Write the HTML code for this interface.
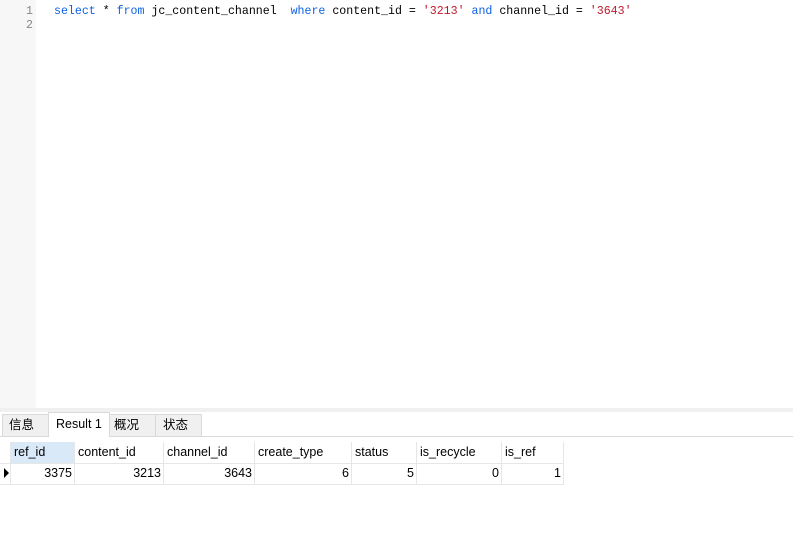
<!DOCTYPE html><html><head><style>
body{margin:0;width:793px;height:541px;background:#fff;position:relative;overflow:hidden;font-family:"Liberation Sans","Noto Sans CJK SC",sans-serif}
.g{position:absolute;left:0;top:0;width:36px;height:408px;background:#f7f7f7}
.ln{position:absolute;left:0;width:33px;text-align:right;font:11.6px "Liberation Mono",monospace;color:#888}
.code{position:absolute;left:54px;top:5px;font:11.6px/14px "Liberation Mono",monospace;color:#000;white-space:pre}
.k{color:#0d62e6}.s{color:#c0182a}
.band{position:absolute;left:0;top:408px;width:793px;height:4px;background:#f0f0f0}
.tab{position:absolute;top:414px;height:22px;background:#f0f0f0;border:1px solid #d9d9d9;border-bottom:none;box-sizing:border-box;font-size:12.5px;line-height:18px;padding:1px 0 0 6px}
.tab.sel{top:412px;height:25px;background:#fff;padding:2px 0 0 7px}
.line{position:absolute;left:0;top:436px;width:793px;height:1px;background:#d9d9d9}
.c{position:absolute;box-sizing:border-box;border-right:1px solid #e6e6e6;border-bottom:1px solid #e6e6e6;font-size:12.5px;padding:3px 4px 0 3px;height:22px}
.h{top:442px}.r{top:463px;text-align:right;padding-right:2px}
</style></head><body>
<div class="g"></div>
<div class="ln" style="top:5px">1</div><div class="ln" style="top:19px">2</div>
<div class="code"><span class="k">select</span> * <span class="k">from</span> jc_content_channel  <span class="k">where</span> content_id = <span class="s">'3213'</span> <span class="k">and</span> channel_id = <span class="s">'3643'</span></div>
<div class="band"></div>
<div class="line"></div>
<div class="tab" style="left:2px;width:47px">信息</div>
<div class="tab sel" style="left:48px;width:62px">Result 1</div>
<div class="tab" style="left:109px;width:47px;padding-left:4px">概况</div>
<div class="tab" style="left:155px;width:47px;padding-left:7px">状态</div>
<div class="c h" style="left:0;width:11px"></div>
<div class="c r" style="left:0;width:11px;padding:4px 0 0 2px"><svg width="7" height="12"><path d="M1 1L6 6L1 11Z" fill="#000"/></svg></div>
<div class="c h" style="left:11px;width:64px;background:#d9e9f7">ref_id</div>
<div class="c h" style="left:75px;width:89px">content_id</div>
<div class="c h" style="left:164px;width:91px">channel_id</div>
<div class="c h" style="left:255px;width:97px">create_type</div>
<div class="c h" style="left:352px;width:65px">status</div>
<div class="c h" style="left:417px;width:85px">is_recycle</div>
<div class="c h" style="left:502px;width:62px">is_ref</div>
<div class="c r" style="left:11px;width:64px">3375</div>
<div class="c r" style="left:75px;width:89px">3213</div>
<div class="c r" style="left:164px;width:91px">3643</div>
<div class="c r" style="left:255px;width:97px">6</div>
<div class="c r" style="left:352px;width:65px">5</div>
<div class="c r" style="left:417px;width:85px">0</div>
<div class="c r" style="left:502px;width:62px">1</div>
</body></html>
